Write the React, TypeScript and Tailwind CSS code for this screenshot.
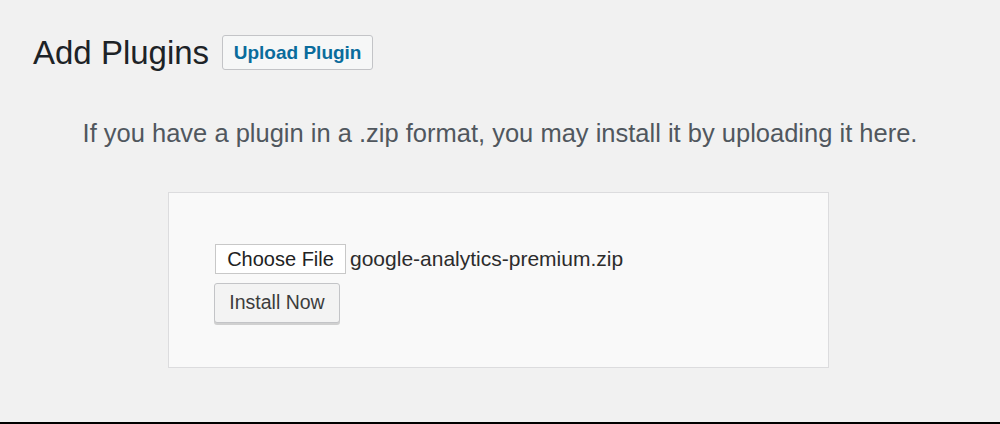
import React from "react";

export default function App() {
  return (
    <div
      className="w-[1000px] h-[424px] bg-[#f1f1f1] flex flex-col overflow-hidden"
      style={{ fontFamily: '"Liberation Sans", Arial, sans-serif' }}
    >
      <div className="flex-1 flex flex-col">
        <div className="flex items-center pl-[33px] pt-[35px]">
          <h1 className="text-[33px] leading-[35px] text-[#1d2327] font-normal">Add Plugins</h1>
          <button className="ml-[13px] h-[35px] w-[151px] border border-[#c3c4c7] rounded-[3px] bg-[#f6f7f7] text-[#0a6c9c] font-bold text-[19px] leading-none">
            Upload Plugin
          </button>
        </div>
        <p className="mt-[48px] text-center text-[25.5px] leading-[30px] text-[#50575e]">
          If you have a plugin in a .zip format, you may install it by uploading it here.
        </p>
        <div className="ml-[168px] mt-[44px] w-[661px] h-[176px] bg-[#f9f9f9] border border-[#dcdcde] pl-[46px] pt-[50px]">
          <div className="flex items-center">
            <span className="h-[30px] w-[131px] flex items-center justify-center border border-[#c8c8c8] bg-white text-[20px] text-[#222]">
              Choose File
            </span>
            <span className="ml-[4px] text-[21px] text-[#2c2c2c]">google-analytics-premium.zip</span>
          </div>
          <button className="mt-[8px] -ml-[1px] h-[40px] w-[126px] border border-[#c3c4c7] rounded-[3px] bg-[#f3f3f3] shadow-[0_2px_0_#d0d0d0] text-[19.5px] text-[#3c3c3c]">
            Install Now
          </button>
        </div>
      </div>
      <div className="h-[2px] bg-black" />
    </div>
  );
}
